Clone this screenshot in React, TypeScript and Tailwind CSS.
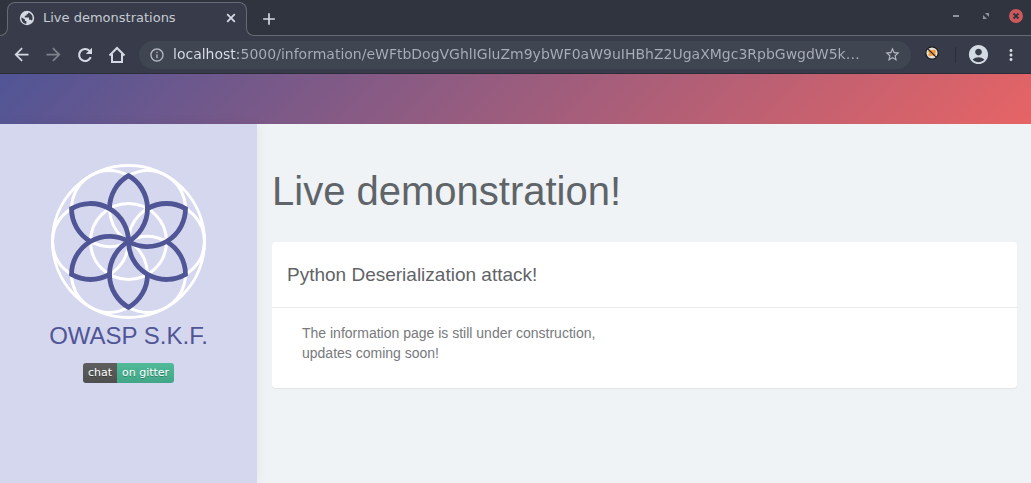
import type { ReactNode } from "react";
import {
  MdAccountCircle,
  MdArrowBack,
  MdArrowForward,
  MdAdd,
  MdInfoOutline,
  MdMoreVert,
  MdStarBorder,
} from "react-icons/md";

const PETAL_ANGLES = [0, 60, 120, 180, 240, 300];

function FlowerLogo() {
  return (
    <svg viewBox="-77.5 -77.5 155 155" className="h-[155px] w-[155px]" fill="none" role="img" aria-label="OWASP S.K.F. logo">
      <g stroke="#ffffff" strokeWidth="3">
        <circle r="76" />
        <circle r="38" />
        {PETAL_ANGLES.map((a) => (
          <circle key={a} cx="38" r="38" transform={`rotate(${a})`} />
        ))}
      </g>
      <g stroke="#505596" strokeWidth="4.8">
        {PETAL_ANGLES.map((a) => (
          <path key={a} d="M-19 -32.9A38 38 0 0 1 0 -65.8A38 38 0 0 1 0 0" transform={`rotate(${a})`} />
        ))}
      </g>
    </svg>
  );
}

function ToolButton({ label, dim, children }: { label: string; dim?: boolean; children: ReactNode }) {
  return (
    <button
      type="button"
      aria-label={label}
      className={`flex h-8 w-8 items-center justify-center ${dim ? "text-[#7c818c]" : "text-[#d3dae3]"}`}
    >
      {children}
    </button>
  );
}

function TabStrip() {
  return (
    <div className="flex h-9 bg-[#2f343f]">
      <div className="flex w-[254px] flex-col pt-0.5">
        <div className="mx-[7px] flex h-[26px] items-end gap-2 rounded-t-lg border border-b-0 border-[#666a75] bg-[#383c4a] pr-2 pl-[11px] text-[#d3dae3]">
          <span className="flex h-5 items-center">
            <svg viewBox="0 0 16 16" className="h-4 w-4">
              <circle cx="8" cy="8" r="7.2" fill="#d3dae3" />
              <path
                d="M2.4 7.2L6 9.6V11H7.4V13.8C4.4 13.6 2 11 2.4 7.2ZM9.4 2.4C9.4 4 8.6 4.2 7.4 4.4V5.8H5.8V7.4H10V9.8H11.4C12 9.8 12.6 10.2 12.7 10.8C14.4 8.6 14 4 9.4 2.4Z"
                fill="#383c4a"
              />
            </svg>
          </span>
          <span className="flex-1 text-[13px] leading-5 text-[#c5cad3]">Live demonstrations</span>
          <button type="button" aria-label="Close tab" className="flex h-5 items-center">
            <svg viewBox="0 0 14 14" className="h-3.5 w-3.5" stroke="currentColor" strokeWidth="1.8">
              <path d="M3.2 3.2L10.8 10.8M10.8 3.2L3.2 10.8" />
            </svg>
          </button>
        </div>
        <div className="flex h-2 bg-[#383c4a]">
          <div className="w-2 rounded-br-lg border-r border-b border-[#666a75] bg-[#2f343f]" />
          <div className="flex-1" />
          <div className="w-2 rounded-bl-lg border-b border-l border-[#666a75] bg-[#2f343f]" />
        </div>
      </div>
      <div className="flex flex-1 items-center justify-between border-b border-[#666a75] pr-2 pl-[5px]">
        <button type="button" aria-label="New tab" className="pt-0.5 text-[#d3dae3]">
          <MdAdd size={20} />
        </button>
        <div className="flex items-center gap-4 pb-1">
          <button type="button" aria-label="Minimize" className="flex h-3.5 w-3.5 items-center justify-center">
            <span className="h-0.5 w-1.5 bg-[#8f95a0]" />
          </button>
          <button type="button" aria-label="Restore" className="flex h-3.5 w-3.5 items-center justify-center">
            <svg viewBox="0 0 6 6" className="h-1.5 w-1.5" fill="#8f95a0">
              <path d="M2 0H6V4ZM0 2V6H4Z" />
            </svg>
          </button>
          <button type="button" aria-label="Close window">
            <svg viewBox="0 0 14 14" className="h-3.5 w-3.5">
              <circle cx="7" cy="7" r="7" fill="#cc575d" />
              <path d="M4.5 4.5L9.5 9.5M9.5 4.5L4.5 9.5" stroke="#2f343f" strokeWidth="1.8" />
            </svg>
          </button>
        </div>
      </div>
    </div>
  );
}

function Toolbar() {
  return (
    <div className="flex h-[38px] items-center border-b border-[#2b2e39] bg-[#383c4a] pl-[5px]">
      <ToolButton label="Back">
        <MdArrowBack size={21} />
      </ToolButton>
      <ToolButton label="Forward" dim>
        <MdArrowForward size={21} />
      </ToolButton>
      <ToolButton label="Reload">
        <svg viewBox="0 0 20 20" className="h-5 w-5" fill="none" stroke="currentColor" strokeWidth="2.1">
          <path d="M15.7 12.2A6 6 0 1 1 14.5 5.9L15.5 7" />
          <path d="M17 2.8V9H10.8Z" fill="currentColor" stroke="none" />
        </svg>
      </ToolButton>
      <ToolButton label="Home">
        <svg viewBox="0 0 20 20" className="h-5 w-5" fill="none" stroke="currentColor" strokeWidth="2">
          <path d="M2.5 10.5L10 3L17.5 10.5M5 9V17H15V9" />
        </svg>
      </ToolButton>
      <div className="ml-1.5 flex h-7 min-w-0 flex-1 items-center rounded-full bg-[#404552] px-2.5 text-[#b4b9c3]">
        <MdInfoOutline size={16} />
        <input
          type="text"
          aria-label="Address"
          readOnly
          value="localhost:5000/information/eWFtbDogVGhlIGluZm9ybWF0aW9uIHBhZ2UgaXMgc3RpbGwgdW5kZXIgY29uc3RydWN0aW9uLCB1cGRhdGVzIGNvbWluZyBzb29uIQ=="
          className="ml-2 min-w-0 flex-1 overflow-hidden bg-[linear-gradient(90deg,#dbe1ea_65px,#a9afba_65px)] bg-clip-text text-[14px] text-ellipsis text-transparent outline-none"
        />
        <button type="button" aria-label="Bookmark" className="ml-5">
          <MdStarBorder size={17} />
        </button>
      </div>
      <button type="button" aria-label="Extension" className="mb-1 ml-3.5">
        <svg viewBox="0 0 14 14" className="h-3.5 w-3.5">
          <circle cx="7" cy="7" r="6.2" fill="#e4e0d8" stroke="#17181c" strokeWidth="1.2" />
          <path d="M3 5L5 3.5L7 4.2L9.5 3.5L11 5L10.3 7L11 9L9 10.3L7 9.6L4.5 10.5L3.2 9L4 7Z" fill="#f09a3c" />
          <path d="M2.8 2.8L11.2 11.2" stroke="#17181c" strokeWidth="1.1" />
        </svg>
      </button>
      <div className="ml-4 h-4 w-px bg-[#2b2e39]" />
      <button type="button" aria-label="Profile" className="ml-[11px] text-[#d3dae3]">
        <MdAccountCircle size={23} />
      </button>
      <button type="button" aria-label="Menu" className="mr-[11px] ml-3 text-[#d3dae3]">
        <MdMoreVert size={18} />
      </button>
    </div>
  );
}

export default function App() {
  return (
    <div className="flex min-h-screen flex-col bg-[#eff3f6] font-['Liberation_Sans',sans-serif]">
      <header className="font-['DejaVu_Sans',sans-serif]">
        <TabStrip />
        <Toolbar />
      </header>
      <div className="h-[50px] bg-[linear-gradient(135deg,#505596,#e66465)]" />
      <div className="flex flex-1">
        <aside className="flex w-[257px] shrink-0 flex-col items-center bg-[#d4d7ee] pt-10 shadow-[1px_0_12px_rgba(0,0,0,0.05)]">
          <FlowerLogo />
          <h2 className="text-2xl leading-[34px] text-[#505596]">OWASP S.K.F.</h2>
          <a
            href="#chat"
            className="mt-2.5 flex overflow-hidden rounded-[3px] font-['DejaVu_Sans',sans-serif] text-[11px] leading-5 text-white [text-shadow:0_1px_0_rgba(1,1,1,0.3)]"
          >
            <span className="bg-linear-to-b from-[#5f5f5f] to-[#4e4e4e] px-[5px]">chat</span>
            <span className="bg-linear-to-b from-[#50ba98] to-[#41a687] px-[5px]">on gitter</span>
          </a>
        </aside>
        <main className="min-w-0 flex-1 pt-[37px] pr-3.5 pb-8 pl-[15px]">
          <h1 className="text-[40px] leading-[60px] text-[#5f6468]">Live demonstration!</h1>
          <section className="mt-[21px] rounded bg-white shadow-[0_1px_1px_rgba(0,0,0,0.06)]">
            <h3 className="border-b border-[#e9ebed] px-[15px] py-5 text-[19px] leading-[25px] text-[#5f6468]">
              Python Deserialization attack!
            </h3>
            <p className="px-[30px] pt-[15px] pb-[25px] text-sm leading-5 text-[#777a7d]">
              The information page is still under construction,
              <br />
              updates coming soon!
            </p>
          </section>
        </main>
      </div>
    </div>
  );
}
